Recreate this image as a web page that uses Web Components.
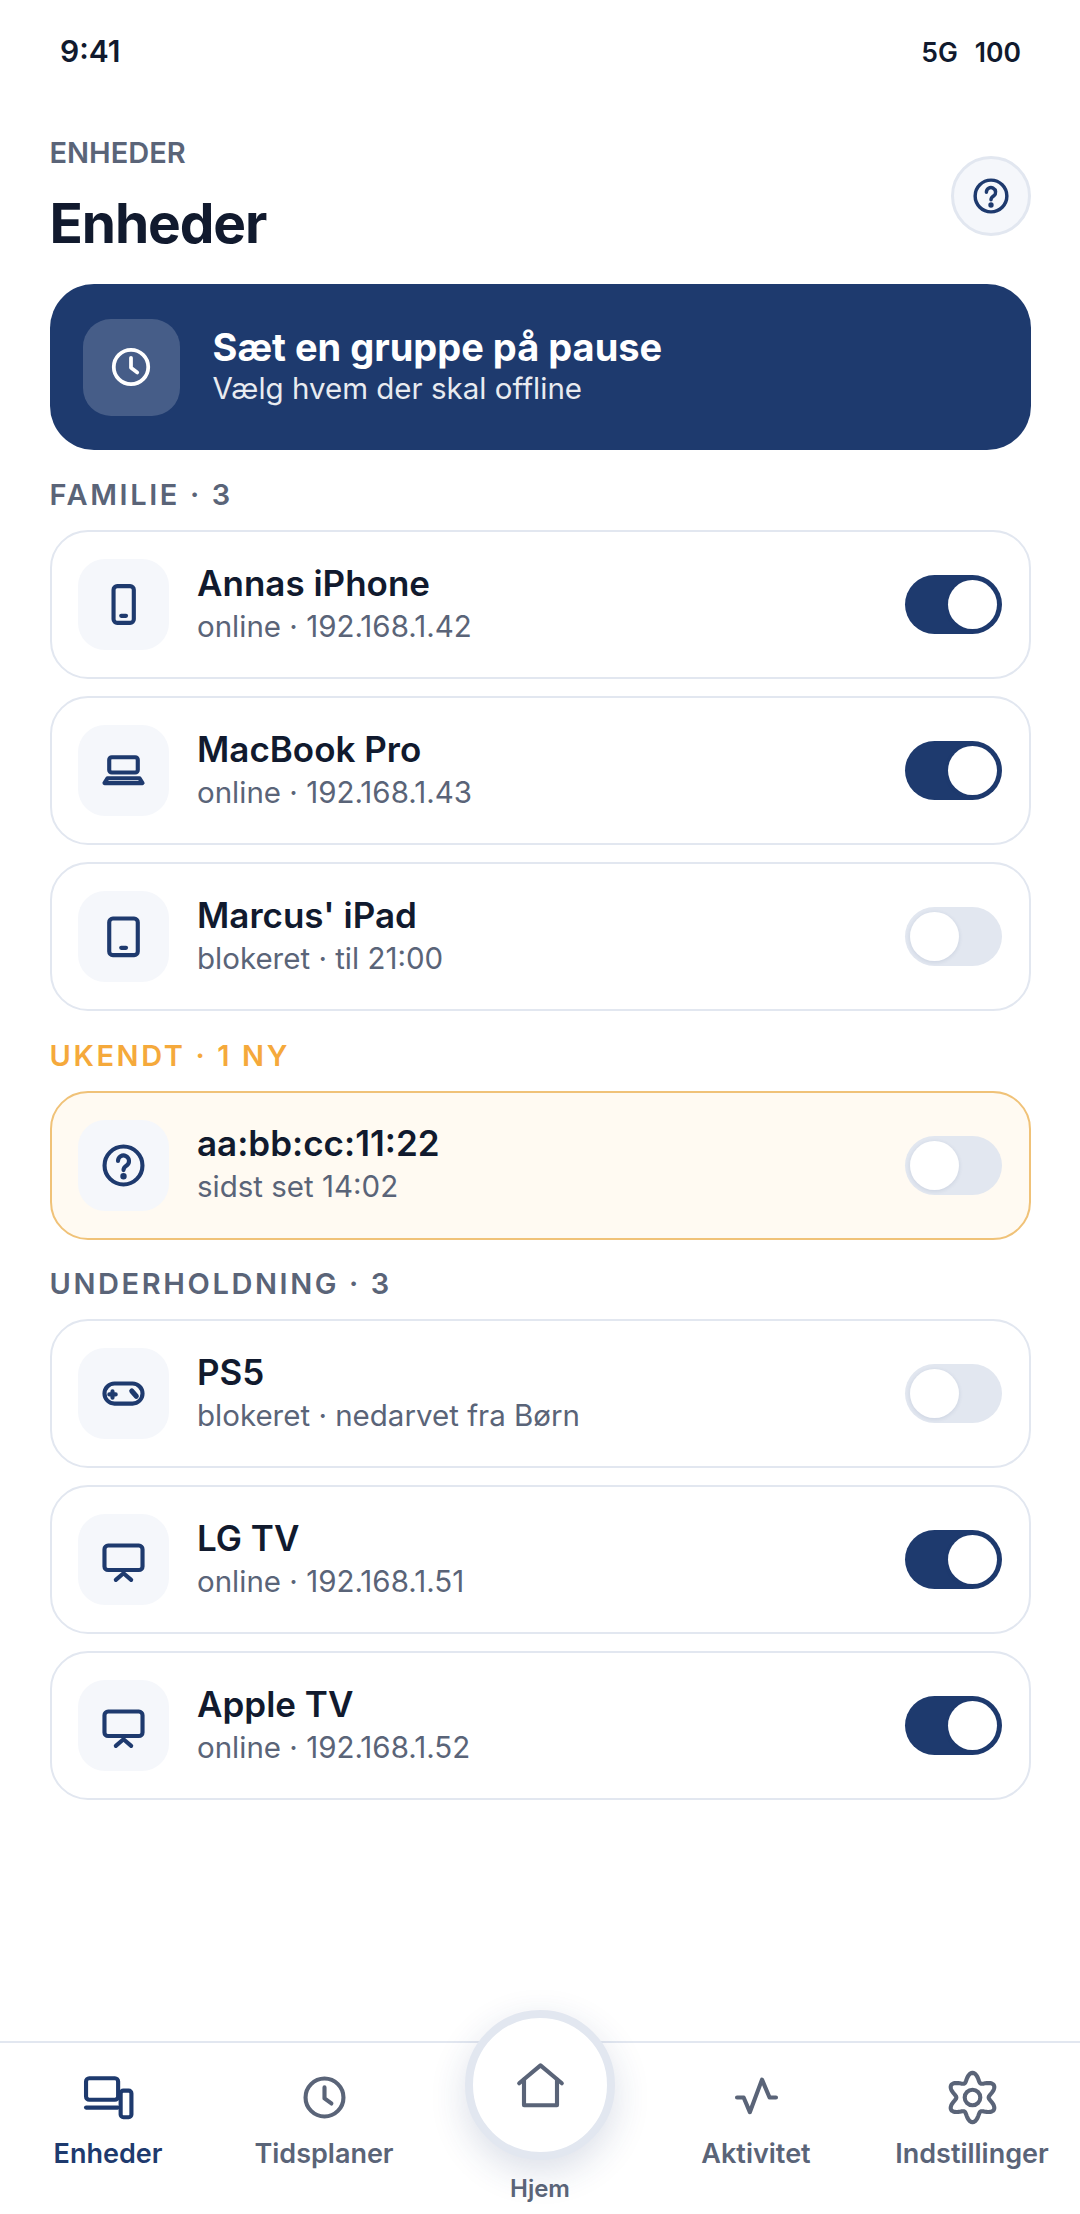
<!DOCTYPE html>
<html lang="da">
<head>
<meta charset="utf-8">
<title>Enheder</title>
<style>
  html, body { margin: 0; padding: 0; background: #fff; }
  body { font-family: Inter, "Noto Sans", sans-serif; color: #111a2e; }
  #app { display: flex; flex-direction: column; width: 1080px; height: 2214px; overflow: hidden; }
  #main { flex: 1; display: flex; flex-direction: column; padding: 0 49.5px; }
</style>
</head>
<body>
<div id="app">
  <status-bar></status-bar>
  <div id="main">
    <page-header kicker="ENHEDER" title="Enheder"></page-header>
    <pause-banner title="Sæt en gruppe på pause" sub="Vælg hvem der skal offline"></pause-banner>

    <section-label>FAMILIE · 3</section-label>
    <device-card icon="phone" on>
      <span slot="name">Annas iPhone</span>
      <span slot="sub">online · 192.168.1.42</span>
    </device-card>
    <device-card icon="laptop" on>
      <span slot="name">MacBook Pro</span>
      <span slot="sub">online · 192.168.1.43</span>
    </device-card>
    <device-card icon="tablet">
      <span slot="name">Marcus' iPad</span>
      <span slot="sub">blokeret · til 21:00</span>
    </device-card>

    <section-label warn>UKENDT · 1 NY</section-label>
    <device-card icon="help" warn>
      <span slot="name">aa:bb:cc:11:22</span>
      <span slot="sub">sidst set 14:02</span>
    </device-card>

    <section-label>UNDERHOLDNING · 3</section-label>
    <device-card icon="gamepad">
      <span slot="name">PS5</span>
      <span slot="sub">blokeret · nedarvet fra Børn</span>
    </device-card>
    <device-card icon="tv" on>
      <span slot="name">LG TV</span>
      <span slot="sub">online · 192.168.1.51</span>
    </device-card>
    <device-card icon="tv" on>
      <span slot="name">Apple TV</span>
      <span slot="sub">online · 192.168.1.52</span>
    </device-card>
  </div>
  <bottom-nav>
    <nav-item icon="devices" active>Enheder</nav-item>
    <nav-item icon="clock">Tidsplaner</nav-item>
    <nav-item icon="home" raised>Hjem</nav-item>
    <nav-item icon="activity">Aktivitet</nav-item>
    <nav-item icon="gear">Indstillinger</nav-item>
  </bottom-nav>
</div>

<script>
// gear outline, six round lobes
function gearPath() {
  let d = "";
  for (let i = 0; i < 120; i++) {
    const a = (i / 120) * Math.PI * 2;
    const c = Math.cos(6 * a);
    const r = 8.9 + 1.85 * c;
    const x = 12 + r * Math.sin(a);
    const y = 12 - r * Math.cos(a);
    d += (i ? "L" : "M") + x.toFixed(2) + " " + y.toFixed(2);
  }
  return d + "Z";
}

const ICONS = {
  phone: `<rect x="7.66" y="4" width="8.84" height="16" rx="1.6"/><path d="M11 16.95h2.1"/>`,
  laptop: `<rect x="5.77" y="6.2" width="12.46" height="6.65" rx="1.1"/><path d="M5 15.4h14l1.3 2.1H3.7z"/>`,
  tablet: `<rect x="5.77" y="4.17" width="12.46" height="15.93" rx="1.6"/><path d="M11 16.95h2.1"/>`,
  help: `<circle cx="12" cy="12" r="8.27"/><path d="M9.6 10a2.4 2.4 0 1 1 3.9 1.9c-.9.6-1.5 1.1-1.5 2.1"/><circle cx="12" cy="16.7" r=".9" fill="currentColor" stroke-width="1"/>`,
  gamepad: `<rect x="3.7" y="7.66" width="16.6" height="8.74" rx="4.37"/><path d="M5.8 12.4h2.8M7.2 11v2.8"/><path d="M15.6 10.9l2 2.3" stroke-width="2.2"/>`,
  tv: `<rect x="3.7" y="5.9" width="16.6" height="10.7" rx="1.6"/><path d="M8.65 20.9L12 18l3.35 2.9"/>`,
  clock: `<circle cx="12" cy="12" r="8.27"/><path d="M12 7.6v4.8l3 2.2"/>`,
  devices: `<rect x="2.2" y="3.6" width="14" height="9.4" rx="1.4"/><path d="M2.2 16.4H16"/><rect x="17.3" y="9" width="4.7" height="11.6" rx="1.2"/>`,
  home: `<path d="M2.7 11L12 3.2l9.3 7.8"/><path d="M4.8 9.4v11.2h14.4V9.4"/>`,
  activity: `<path d="M3.5 12h2.9l2.7 6.4L14.4 4.2L17.7 12h2.8"/>`,
  gear: `<path d="${gearPath()}"/><circle cx="12" cy="12" r="3.4"/>`
};

function iconSvg(name, size) {
  return `<svg xmlns="http://www.w3.org/2000/svg" width="${size}" height="${size}" viewBox="0 0 24 24" fill="none" stroke="currentColor" stroke-width="1.8" stroke-linecap="round" stroke-linejoin="round">${ICONS[name]}</svg>`;
}

class StatusBar extends HTMLElement {
  connectedCallback() {
    this.attachShadow({ mode: "open" }).innerHTML = `
      <style>
        :host { display: flex; justify-content: space-between; align-items: baseline; height: 100px; padding: 34px 59px 0 60px; box-sizing: border-box; font-size: 30px; line-height: 34px; font-weight: 600; color: #111a2e; }
        .r { display: flex; gap: 17px; font-size: 26.5px; }
      </style>
      <span>9:41</span><div class="r"><span>5G</span><span>100</span></div>`;
  }
}

class PageHeader extends HTMLElement {
  connectedCallback() {
    this.attachShadow({ mode: "open" }).innerHTML = `
      <style>
        :host { display: flex; justify-content: space-between; align-items: flex-start; padding-top: 34px; height: 184px; box-sizing: border-box; }
        .kicker { font-size: 29px; font-weight: 600; color: #5a6478; line-height: 38px; }
        h1 { margin: 18px 0 0; font-size: 55px; font-weight: 700; line-height: 66px; color: #111a2e; letter-spacing: -1.1px; }
        .help { width: 80px; height: 80px; box-sizing: border-box; border-radius: 50%; border: 3px solid #e2e7f0; background: #f5f7fb; color: #1e3a6e; display: flex; align-items: center; justify-content: center; margin-top: 22px; }
      </style>
      <div><div class="kicker">${this.getAttribute("kicker")}</div><h1>${this.getAttribute("title")}</h1></div>
      <div class="help">${iconSvg("help", 46)}</div>`;
  }
}

class PauseBanner extends HTMLElement {
  connectedCallback() {
    this.attachShadow({ mode: "open" }).innerHTML = `
      <style>
        :host { display: flex; align-items: center; gap: 33px; height: 166px; margin-bottom: 17.5px; padding: 0 33px; box-sizing: border-box; border-radius: 44px; background: #1e3a6e; color: #fff; }
        .box { width: 97px; height: 97px; border-radius: 28px; background: rgba(255,255,255,.18); display: flex; align-items: center; justify-content: center; }
        .t { font-size: 38px; font-weight: 700; line-height: 42px; }
        .s { font-size: 29.5px; line-height: 40px; opacity: .9; }
      </style>
      <div class="box">${iconSvg("clock", 50)}</div>
      <div><div class="t">${this.getAttribute("title")}</div><div class="s">${this.getAttribute("sub")}</div></div>`;
  }
}

class SectionLabel extends HTMLElement {
  connectedCallback() {
    this.attachShadow({ mode: "open" }).innerHTML = `
      <style>
        :host { display: block; margin: 10.5px 0 18px; font-size: 29px; line-height: 34px; font-weight: 600; letter-spacing: 2.6px; color: #5a6478; }
        :host([warn]) { color: #f5a93b; }
      </style>
      <slot></slot>`;
  }
}

class ToggleSwitch extends HTMLElement {
  connectedCallback() {
    this.attachShadow({ mode: "open" }).innerHTML = `
      <style>
        :host { flex: none; display: flex; align-items: center; width: 97px; height: 59px; padding: 5px; box-sizing: border-box; border-radius: 30px; background: #e2e7f0; }
        :host([on]) { background: #1e3a6e; justify-content: flex-end; }
        i { width: 49px; height: 49px; border-radius: 50%; background: #fff; box-shadow: 0 1px 4px rgba(30,58,110,.12); }
      </style>
      <i></i>`;
  }
}

class DeviceCard extends HTMLElement {
  connectedCallback() {
    const on = this.hasAttribute("on");
    this.attachShadow({ mode: "open" }).innerHTML = `
      <style>
        :host { display: flex; align-items: center; gap: 28px; height: 149px; margin-bottom: 17px; padding: 0 26.5px; box-sizing: border-box; border: 2px solid #e2e7f0; border-radius: 38px; background: #fff; }
        :host([warn]) { background: #fffaf2; border-color: #f0c278; }
        .box { flex: none; width: 91px; height: 91px; border-radius: 27px; background: #f5f7fb; color: #1e3a6e; display: flex; align-items: center; justify-content: center; }
        .txt { flex: 1; min-width: 0; }
        .name { font-size: 35px; font-weight: 600; line-height: 42px; color: #111a2e; }
        .sub { font-size: 29.5px; line-height: 44px; color: #5a6478; }
      </style>
      <div class="box">${iconSvg(this.getAttribute("icon"), 55)}</div>
      <div class="txt"><div class="name"><slot name="name"></slot></div><div class="sub"><slot name="sub"></slot></div></div>
      <toggle-switch ${on ? "on" : ""}></toggle-switch>`;
  }
}

class BottomNav extends HTMLElement {
  connectedCallback() {
    this.attachShadow({ mode: "open" }).innerHTML = `
      <style>
        :host { display: grid; grid-template-columns: repeat(5, 216px); height: 173px; box-sizing: border-box; border-top: 2px solid #e2e7f0; background: #fff; }
      </style>
      <slot></slot>`;
  }
}

class NavItem extends HTMLElement {
  connectedCallback() {
    this.attachShadow({ mode: "open" }).innerHTML = `
      <style>
        :host { display: flex; flex-direction: column; align-items: center; padding-top: 26.5px; font-size: 27px; font-weight: 600; line-height: 34px; color: #5a6478; }
        :host([active]) { color: #1e3a6e; }
        svg { display: block; }
        .lab { margin-top: 12.5px; }
        :host([raised]) { padding-top: 0; font-size: 24px; }
        :host([raised]) .lab { margin-top: 12px; }
        .circle { width: 150px; height: 150px; margin-top: -33px; box-sizing: border-box; border-radius: 50%; border: 8px solid #e2e7f0; background: #fff; display: flex; align-items: center; justify-content: center; box-shadow: 0 12px 36px rgba(30,58,110,.16); }
      </style>
      ${this.hasAttribute("raised")
        ? `<div class="circle">${iconSvg(this.getAttribute("icon"), 55)}</div>`
        : iconSvg(this.getAttribute("icon"), 55)}
      <div class="lab"><slot></slot></div>`;
  }
}

customElements.define("status-bar", StatusBar);
customElements.define("page-header", PageHeader);
customElements.define("pause-banner", PauseBanner);
customElements.define("section-label", SectionLabel);
customElements.define("toggle-switch", ToggleSwitch);
customElements.define("device-card", DeviceCard);
customElements.define("bottom-nav", BottomNav);
customElements.define("nav-item", NavItem);
</script>
</body>
</html>
